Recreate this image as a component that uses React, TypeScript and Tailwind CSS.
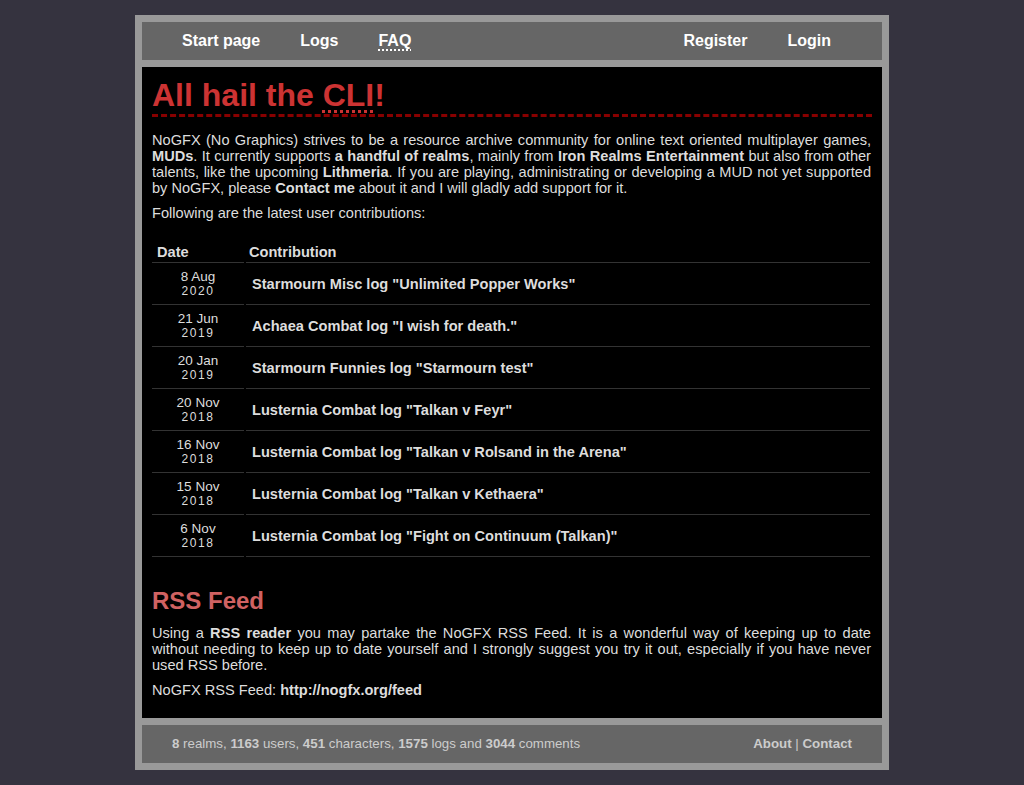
import React from "react";

const rows = [
  ["8 Aug", "2020", 'Starmourn Misc log "Unlimited Popper Works"'],
  ["21 Jun", "2019", 'Achaea Combat log "I wish for death."'],
  ["20 Jan", "2019", 'Starmourn Funnies log "Starmourn test"'],
  ["20 Nov", "2018", 'Lusternia Combat log "Talkan v Feyr"'],
  ["16 Nov", "2018", 'Lusternia Combat log "Talkan v Rolsand in the Arena"'],
  ["15 Nov", "2018", 'Lusternia Combat log "Talkan v Kethaera"'],
  ["6 Nov", "2018", 'Lusternia Combat log "Fight on Continuum (Talkan)"'],
];

export default function App() {
  return (
    <div
      className="min-h-[785px] w-full bg-[#35333f] pt-[15px]"
      style={{ fontFamily: '"Liberation Sans", Arial, Helvetica, sans-serif' }}
    >
      <div className="mx-auto w-[754px] bg-[#999999] p-[7px]">
        <nav className="flex h-[38px] items-center bg-[#666666] text-[16px] font-bold leading-[18px] text-white">
          <a className="ml-[40px]">Start page</a>
          <a className="ml-[40px]">Logs</a>
          <a className="ml-[40px] underline decoration-dotted decoration-2 underline-offset-[3px]">FAQ</a>
          <a className="ml-auto">Register</a>
          <a className="ml-[40px] mr-[51px]">Login</a>
        </nav>
        <main className="mt-[7px] bg-black px-[10px] pb-[20px] pt-[10px] text-[14.6px] leading-[16px] text-[#dddddd]">
          <h1 className="border-b-[3px] border-dashed border-[#880000] pb-[1px] text-[32px] font-bold leading-[36px] text-[#cc3333]">
            All hail the{" "}
            <span className="underline decoration-dotted decoration-[3px] underline-offset-[4px]">CLI</span>!
          </h1>
          <p className="mt-[15px] mr-[1px] text-justify">
            NoGFX (No Graphics) strives to be a resource archive community for online text oriented multiplayer games,{" "}
            <b>MUDs</b>. It currently supports <b>a handful of realms</b>, mainly from{" "}
            <b>Iron Realms Entertainment</b> but also from other talents, like the upcoming <b>Lithmeria</b>. If you are
            playing, administrating or developing a MUD not yet supported by NoGFX, please <b>Contact me</b> about it and
            I will gladly add support for it.
          </p>
          <p className="mt-[9px]">Following are the latest user contributions:</p>
          <table className="-ml-[2px] mt-[23px] w-[722px] border-separate border-spacing-x-[2px] border-spacing-y-0">
            <thead>
              <tr className="text-left font-bold">
                <th className="w-[92px] border-b border-[#333333] pb-[2px] pl-[5px] text-left">Date</th>
                <th className="border-b border-[#333333] pb-[2px] pl-[3px] text-left">Contribution</th>
              </tr>
            </thead>
            <tbody>
              {rows.map((r, i) => (
                <tr key={i}>
                  <td className="h-[42px] border-b border-[#333333] text-center text-[13.5px] leading-[14px] text-[#dddddd]">
                    <div>{r[0]}</div>
                    <div className="text-[12px] tracking-[1.6px]">{r[1]}</div>
                  </td>
                  <td className="h-[42px] border-b border-[#333333] pl-[6px] font-bold text-[#dddddd]">{r[2]}</td>
                </tr>
              ))}
            </tbody>
          </table>
          <h2 className="mt-[30px] text-[24px] font-bold leading-[28px] text-[#d06262]">RSS Feed</h2>
          <p className="mt-[10px] mr-[1px] text-justify">
            Using a <b>RSS reader</b> you may partake the NoGFX RSS Feed. It is a wonderful way of keeping up to date
            without needing to keep up to date yourself and I strongly suggest you try it out, especially if you have
            never used RSS before.
          </p>
          <p className="mt-[9px]">
            NoGFX RSS Feed: <b>http://nogfx.org/feed</b>
          </p>
        </main>
        <footer className="mt-[7px] flex h-[38px] items-center bg-[#666666] text-[13.3px] text-[#cccccc]">
          <span className="ml-[30px]">
            <b>8</b> realms, <b>1163</b> users, <b>451</b> characters, <b>1575</b> logs and <b>3044</b> comments
          </span>
          <span className="ml-auto mr-[30px]">
            <b>About</b> | <b>Contact</b>
          </span>
        </footer>
      </div>
    </div>
  );
}
